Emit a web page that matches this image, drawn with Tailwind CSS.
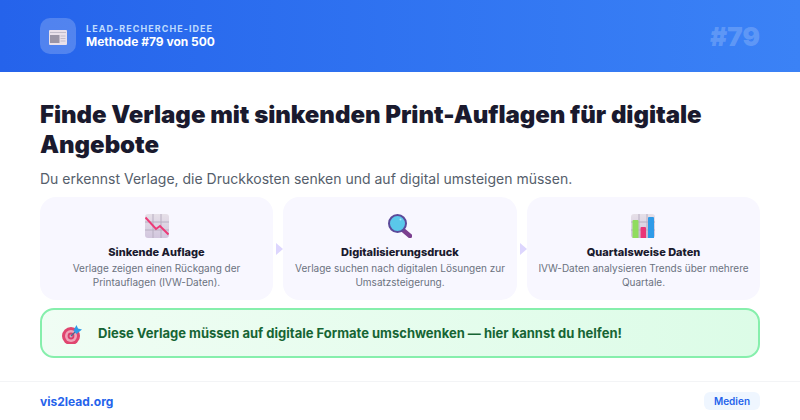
<!DOCTYPE html>
<html lang="de">
<head>
<meta charset="UTF-8">
<title>Methode #79</title>
<script src="https://cdn.jsdelivr.net/npm/@tailwindcss/browser@4"></script>
</head>
<body class="w-[800px] h-[420px] overflow-hidden bg-white font-['Inter',sans-serif] flex flex-col">

<!-- Header -->
<header class="h-[72px] shrink-0 px-10 flex items-center justify-between bg-gradient-to-r from-[#2563eb] to-[#3b82f6]">
  <div class="flex items-center gap-2.5">
    <div class="w-9 h-9 rounded-[10px] bg-white/20 flex items-center justify-center">
      <svg width="18" height="15" viewBox="0 0 18 15" class="mt-[2px]">
        <rect x="0" y="0" width="18" height="15" rx="1" fill="#e9e0ea"/>
        <rect x="1" y="2" width="16" height="1" fill="#c2bccb"/>
        <rect x="1" y="5" width="9.5" height="8" fill="#9a94a6"/>
        <rect x="11.5" y="5.5" width="5" height="1" fill="#c2bccb"/>
        <rect x="11.5" y="8" width="5" height="1" fill="#c2bccb"/>
        <rect x="11.5" y="10.5" width="5" height="1" fill="#c2bccb"/>
      </svg>
    </div>
    <div>
      <div class="text-[9px] leading-[11px] font-bold tracking-[1.05px] text-[#bfdbfe]">LEAD-RECHERCHE-IDEE</div>
      <div class="text-xs leading-[16px] font-bold text-white">Methode #79 von 500</div>
    </div>
  </div>
  <div class="text-[26px] font-black text-white/20">#79</div>
</header>

<!-- Content -->
<main class="flex-1 px-10 pt-[28px]">
  <h1 class="text-2xl leading-[30px] font-black tracking-[-0.03px] text-[#1a1a2e]">Finde Verlage mit sinkenden Print-Auflagen für digitale Angebote</h1>
  <p class="mt-[9px] text-sm leading-[20px] text-[#555e6b]">Du erkennst Verlage, die Druckkosten senken und auf digital umsteigen müssen.</p>

  <div class="mt-2 flex h-[103px]">
    <div class="w-[233px] rounded-2xl bg-[#f8f7ff] flex flex-col items-center pt-[17px] text-center">
      <svg width="24" height="24" viewBox="0 0 24 24">
        <defs>
          <linearGradient id="sheet" x1="0" y1="0" x2="0" y2="1">
            <stop offset="0" stop-color="#e6e0e8"/>
            <stop offset="1" stop-color="#d2c6de"/>
          </linearGradient>
        </defs>
        <rect width="24" height="24" rx="3" fill="url(#sheet)"/>
        <path d="M8 0V24M16 0V24M0 8H24M0 16H24" stroke="#b8aec2" stroke-width="1"/>
        <path d="M0.5 3.5L11 15L15 12L23.5 20.5" fill="none" stroke="#ec3b78" stroke-width="2"/>
      </svg>
      <div class="mt-[6px] text-[11px] leading-[16px] font-extrabold text-[#1a1a2e]">Sinkende Auflage</div>
      <div class="mt-[1px] text-[10px] leading-[14px] text-[#6b7280] px-2.5">Verlage zeigen einen Rückgang der Printauflagen (IVW-Daten).</div>
    </div>
    <div class="w-[10px] flex items-center justify-end">
      <svg width="7" height="12" viewBox="0 0 7 12"><path d="M0 0L7 6L0 12Z" fill="#ddd6fe"/></svg>
    </div>
    <div class="w-[234px] rounded-2xl bg-[#f8f7ff] flex flex-col items-center pt-[17px] text-center">
      <svg width="24" height="24" viewBox="0 0 24 24">
        <path d="M15.5 16.5L22 22" stroke="#7b3f8f" stroke-width="4.5" stroke-linecap="round"/>
        <circle cx="9.5" cy="9.5" r="8.5" fill="#5ac8ea" stroke="#5b4a9a" stroke-width="2"/>
        <circle cx="12.5" cy="5.5" r="1" fill="#a8e6f7"/>
      </svg>
      <div class="mt-[6px] text-[11px] leading-[16px] font-extrabold text-[#1a1a2e]">Digitalisierungsdruck</div>
      <div class="mt-[1px] text-[10px] leading-[14px] text-[#6b7280] px-2.5">Verlage suchen nach digitalen Lösungen zur Umsatzsteigerung.</div>
    </div>
    <div class="w-[10px] flex items-center justify-end">
      <svg width="7" height="12" viewBox="0 0 7 12"><path d="M0 0L7 6L0 12Z" fill="#ddd6fe"/></svg>
    </div>
    <div class="w-[233px] rounded-2xl bg-[#f8f7ff] flex flex-col items-center pt-[17px] text-center">
      <svg width="24" height="24" viewBox="0 0 24 24" class="-ml-[1px]">
        <rect width="24" height="24" rx="3" fill="url(#sheet)"/>
        <path d="M8 0V24M16 0V24M0 8H24M0 16H24" stroke="#b8aec2" stroke-width="1"/>
        <path d="M1.5 7a1 1 0 0 1 1-1h4a1 1 0 0 1 1 1V24h-6Z" fill="#8fdc5e"/>
        <path d="M9.5 14a1 1 0 0 1 1-1h3.5a1 1 0 0 1 1 1V24h-5.5Z" fill="#ea3577"/>
        <path d="M17 4a1 1 0 0 1 1-1h4a1 1 0 0 1 1 1V24h-6Z" fill="#2f9be8"/>
      </svg>
      <div class="mt-[6px] text-[11px] leading-[16px] font-extrabold text-[#1a1a2e]">Quartalsweise Daten</div>
      <div class="mt-[1px] text-[10px] leading-[14px] text-[#6b7280] px-2.5">IVW-Daten analysieren Trends über mehrere Quartale.</div>
    </div>
  </div>

  <div class="mt-2 h-[50px] rounded-[14px] border-2 border-[#86efac] bg-gradient-to-r from-[#f0fdf4] to-[#dcfce7] flex items-center gap-[15px] pl-[19px]">
    <svg width="22" height="22" viewBox="0 0 22 22">
      <circle cx="10" cy="14" r="9" fill="#e0456f"/>
      <circle cx="10" cy="14" r="6" fill="#efa3b8"/>
      <circle cx="10" cy="14" r="3.4" fill="#d93d6c"/>
      <circle cx="10" cy="14" r="1.5" fill="#c9b6c4"/>
      <path d="M10 14L17 7" stroke="#4a6c94" stroke-width="1.2"/>
      <path d="M12.5 8.5L15.5 3L17 6.5L21 7.5L15.5 12Z" fill="#2f9be8"/>
    </svg>
    <div class="mt-[1px] text-[13px] font-bold text-[#166534]">Diese Verlage müssen auf digitale Formate umschwenken — hier kannst du helfen!</div>
  </div>
</main>

<!-- Footer -->
<footer class="h-[39px] shrink-0 px-10 border-t border-[#f3f4f6] flex items-center justify-between">
  <div class="mt-[1px] text-xs font-bold text-[#2563eb]">vis2lead.org</div>
  <div class="h-[18px] w-[56px] rounded-md bg-[#eff6ff] flex items-center justify-center text-[10px] font-semibold text-[#2563eb]">Medien</div>
</footer>
</body>
</html>
